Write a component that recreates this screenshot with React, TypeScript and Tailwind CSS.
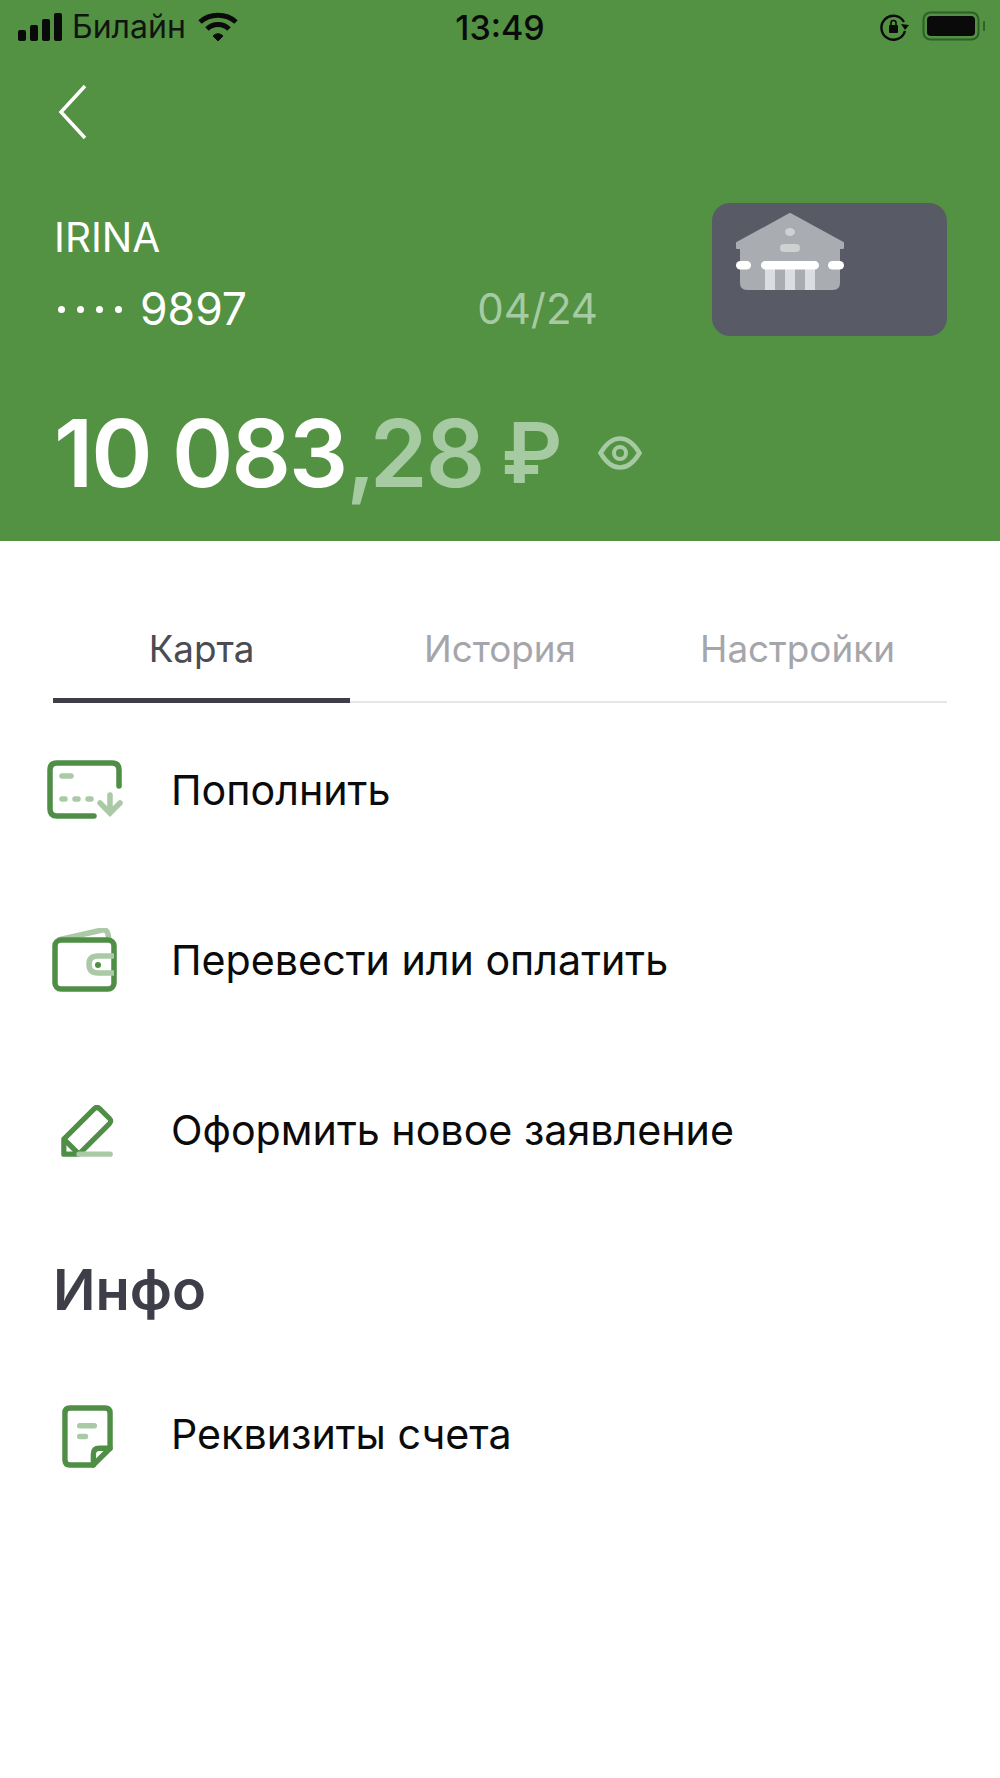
const font = { fontFamily: "Inter, 'Noto Sans', sans-serif" };

function SignalIcon() {
  return (
    <svg width="46" height="28" viewBox="0 0 46 28" fill="#0a0a0a">
      <rect x="0" y="17" width="8" height="11" rx="2" />
      <rect x="12" y="12" width="8" height="16" rx="2" />
      <rect x="24" y="6" width="8" height="22" rx="2" />
      <rect x="36" y="0" width="8" height="28" rx="2" />
    </svg>
  );
}

function WifiIcon() {
  return (
    <svg width="40" height="30" viewBox="0 0 40 30" fill="none" stroke="#0a0a0a" strokeWidth="5">
      <path d="M2 10 C12 1 28 1 38 10" />
      <path d="M9 17 C15 11 25 11 31 17" />
      <path d="M15 24 L20 29 L25 24 C22 21 18 21 15 24 Z" fill="#0a0a0a" strokeWidth="1" />
    </svg>
  );
}

function RotationLockIcon() {
  return (
    <svg width="30" height="28" viewBox="0 0 30 28" fill="none">
      <path d="M24 9 A12 12 0 1 0 25 18" stroke="#0a0a0a" strokeWidth="2.4" />
      <path d="M21 11 L29 12 L25 17 Z" fill="#0a0a0a" />
      <rect x="9" y="12" width="9" height="8" rx="1" fill="#0a0a0a" />
      <path d="M11 12 V10 A2.5 2.5 0 0 1 16 10 V12" stroke="#0a0a0a" strokeWidth="1.6" />
    </svg>
  );
}

function BatteryIcon() {
  return (
    <svg width="66" height="32" viewBox="0 0 66 32" fill="none">
      <rect x="1.5" y="1.5" width="55" height="27" rx="7" stroke="#2f5f2a" strokeWidth="2" />
      <rect x="5" y="5" width="48" height="20" rx="4" fill="#0a0a0a" />
      <rect x="61" y="10" width="2" height="10" rx="1" fill="#2f5f2a" />
    </svg>
  );
}

function BankIcon() {
  return (
    <svg width="110" height="77" viewBox="0 0 110 77" fill="none">
      <path d="M54 1 L107 30 V35 H103 V70 Q103 76 97 76 H11 Q5 76 5 70 V35 H1 V30 Z" fill="#a9acb0" stroke="#a9acb0" strokeWidth="2" strokeLinejoin="round" />
      <ellipse cx="54" cy="19" rx="5" ry="4" fill="#cfd1d3" />
      <rect x="44" y="31" width="20" height="8" rx="4" fill="#cfd1d3" />
      <rect x="29" y="50" width="10" height="27" fill="#dcdde0" />
      <rect x="49" y="50" width="10" height="27" fill="#dcdde0" />
      <rect x="69" y="50" width="10" height="27" fill="#dcdde0" />
      <rect x="0" y="48" width="15" height="8.5" rx="4.25" fill="#fff" />
      <rect x="25" y="48" width="58" height="8.5" rx="4.25" fill="#fff" />
      <rect x="92" y="48" width="16" height="8.5" rx="4.25" fill="#fff" />
    </svg>
  );
}

function EyeIcon() {
  return (
    <svg width="44" height="34" viewBox="0 0 44 34" fill="none" stroke="#a6caa2" strokeWidth="4.5">
      <path d="M2.5 17 C9 6 15 2.5 22 2.5 C29 2.5 35 6 41.5 17 C35 28 29 31.5 22 31.5 C15 31.5 9 28 2.5 17 Z" />
      <circle cx="22" cy="17" r="6" strokeWidth="4" />
    </svg>
  );
}

function TopUpIcon() {
  return (
    <svg className="mb-[2px]" width="76" height="60" viewBox="0 0 76 60" fill="none" strokeLinecap="round">
      <path d="M47 56 H10 Q3 56 3 49 V10 Q3 3 10 3 H65 Q72 3 72 10 V26" stroke="#4f8f45" strokeWidth="5.5" />
      <path d="M15 16 H24" stroke="#a9caa5" strokeWidth="5.5" />
      <path d="M15 39 H18 M28 39 H31 M41 39 H44" stroke="#a9caa5" strokeWidth="5.5" />
      <path d="M63 35 V52 M53 43 L63 53 L73 43" stroke="#a9caa5" strokeWidth="5.5" />
    </svg>
  );
}

function WalletIcon() {
  return (
    <svg width="66" height="66" viewBox="0 0 66 66" fill="none">
      <path d="M6 12 L50 2 Q55 1 56 6 L57 12" stroke="#a9caa5" strokeWidth="5.5" />
      <rect x="3" y="12" width="59" height="49" rx="6" stroke="#4f8f45" strokeWidth="5.5" />
      <path d="M62 28 H46 Q37 28 37 36 Q37 45 46 45 H62" stroke="#a9caa5" strokeWidth="5.5" />
      <circle cx="46" cy="37" r="3" fill="#4f8f45" />
    </svg>
  );
}

function PencilIcon() {
  return (
    <svg className="ml-[5px]" width="53" height="53" viewBox="0 0 56 56" fill="none" strokeLinejoin="round">
      <path d="M3 52 V36 L35 4 Q38 1 41 4 L51 14 Q54 17 51 20 L19 52 Z" stroke="#4f8f45" strokeWidth="5.5" />
      <path d="M3 36 L19 52" stroke="#4f8f45" strokeWidth="5.5" />
      <path d="M19 52 H52" stroke="#a9caa5" strokeWidth="5.5" strokeLinecap="round" />
    </svg>
  );
}

function DocumentIcon() {
  return (
    <svg className="ml-[4px] mt-[2px]" width="51" height="63" viewBox="0 0 52 64" fill="none" strokeLinecap="round" strokeLinejoin="round">
      <path d="M32 61 H8 Q3 61 3 56 V8 Q3 3 8 3 H44 Q49 3 49 8 V44 Z" stroke="#4f8f45" strokeWidth="5.5" />
      <path d="M49 44 H38 Q32 44 32 50 V61" stroke="#4f8f45" strokeWidth="5.5" />
      <path d="M18 21 H33 M18 32 H24" stroke="#a9caa5" strokeWidth="5.5" />
    </svg>
  );
}

const actions = [
  { icon: <TopUpIcon />, label: "Пополнить" },
  { icon: <WalletIcon />, label: "Перевести или оплатить" },
  { icon: <PencilIcon />, label: "Оформить новое заявление" },
];

function ActionRow({ icon, label }: { icon: React.ReactNode; label: string }) {
  return (
    <div className="flex h-[170px] items-center">
      <div className="flex w-[64px] shrink-0 items-center justify-center [&>svg]:shrink-0">{icon}</div>
      <span className="pl-[54px] text-[41.2px] text-[#0b0b0b]">{label}</span>
    </div>
  );
}

export default function App() {
  return (
    <div className="min-h-[1778px] w-[1000px] bg-white" style={font}>
      <header className="h-[541px] bg-[#539143]">
        <div className="flex h-[54px] items-center justify-between pl-[18px] pr-[12px]">
          <div className="flex w-[317px] items-center gap-[8px]">
            <SignalIcon />
            <span className="text-[32px] text-[#101510]">Билайн</span>
            <span className="ml-[4px]"><WifiIcon /></span>
          </div>
          <span className="text-[34px] font-medium text-[#0a0a0a]">13:49</span>
          <div className="flex w-[323px] items-center justify-end gap-[12px]">
            <RotationLockIcon />
            <BatteryIcon />
          </div>
        </div>
        <div className="pl-[58px] pt-[30px]">
          <svg width="30" height="56" viewBox="0 0 30 56" fill="none" stroke="#fff" strokeWidth="3.5">
            <path d="M27 2 L3 28 L27 54" />
          </svg>
        </div>
        <div className="flex items-start justify-between pl-[54px] pr-[53px] pt-[73px]">
          <div className="w-[544px]">
            <div className="text-[40.5px] leading-[50px] text-white">IRINA</div>
            <div className="mt-[21px] flex items-center justify-between">
              <span className="flex items-center gap-[18px]">
                <span className="flex items-center gap-[12px] pl-[4px]">
                  <span className="size-[7px] rounded-full bg-white" />
                  <span className="size-[7px] rounded-full bg-white" />
                  <span className="size-[7px] rounded-full bg-white" />
                  <span className="size-[7px] rounded-full bg-white" />
                </span>
                <span className="text-[44.5px] leading-[50px] text-white">9897</span>
              </span>
              <span className="text-[42px] leading-[50px] text-[#a6caa2]">04/24</span>
            </div>
          </div>
          <div className="mt-[-10px] h-[133px] w-[235px] rounded-[18px] bg-[#585b65] pl-[24px] pt-[10px]">
            <BankIcon />
          </div>
        </div>
        <div className="flex items-center pl-[54px] pt-[67px]">
          <span className="text-[93px] font-semibold leading-[100px] tracking-[-2px] text-white">10 083</span>
          <span className="text-[93px] font-semibold leading-[100px] tracking-[-6px] text-[#a6caa2]">,</span>
          <span className="text-[93px] font-semibold leading-[100px] tracking-[-2px] text-[#a6caa2]">28</span>
          <span className="ml-[18px] text-[84px] font-semibold leading-[100px] text-[#a6caa2]">₽</span>
          <span className="ml-[36px]"><EyeIcon /></span>
        </div>
      </header>

      <main className="px-[53px]">
        <nav className="mt-[78px] flex h-[84px] border-b-2 border-[#e6e6e8]">
          <div className="-mb-[2px] flex w-[297px] justify-center border-b-[5px] border-[#3d3e47] pt-[6px] text-[36.8px] leading-[48px] text-[#4a4b53]">Карта</div>
          <div className="flex w-[298px] justify-center pl-[2px] pt-[6px] text-[36.8px] leading-[48px] text-[#a5a6ab]">История</div>
          <div className="flex w-[299px] justify-center pt-[6px] text-[36.8px] leading-[48px] text-[#a5a6ab]">Настройки</div>
        </nav>
        <div className="mt-[3px]">
          {actions.map((a) => (
            <ActionRow key={a.label} icon={a.icon} label={a.label} />
          ))}
        </div>
        <h2 className="mb-[28px] mt-[42px] text-[56px] font-semibold leading-[64px] text-[#3d3e47]">Инфо</h2>
        <ActionRow icon={<DocumentIcon />} label="Реквизиты счета" />
      </main>
    </div>
  );
}
